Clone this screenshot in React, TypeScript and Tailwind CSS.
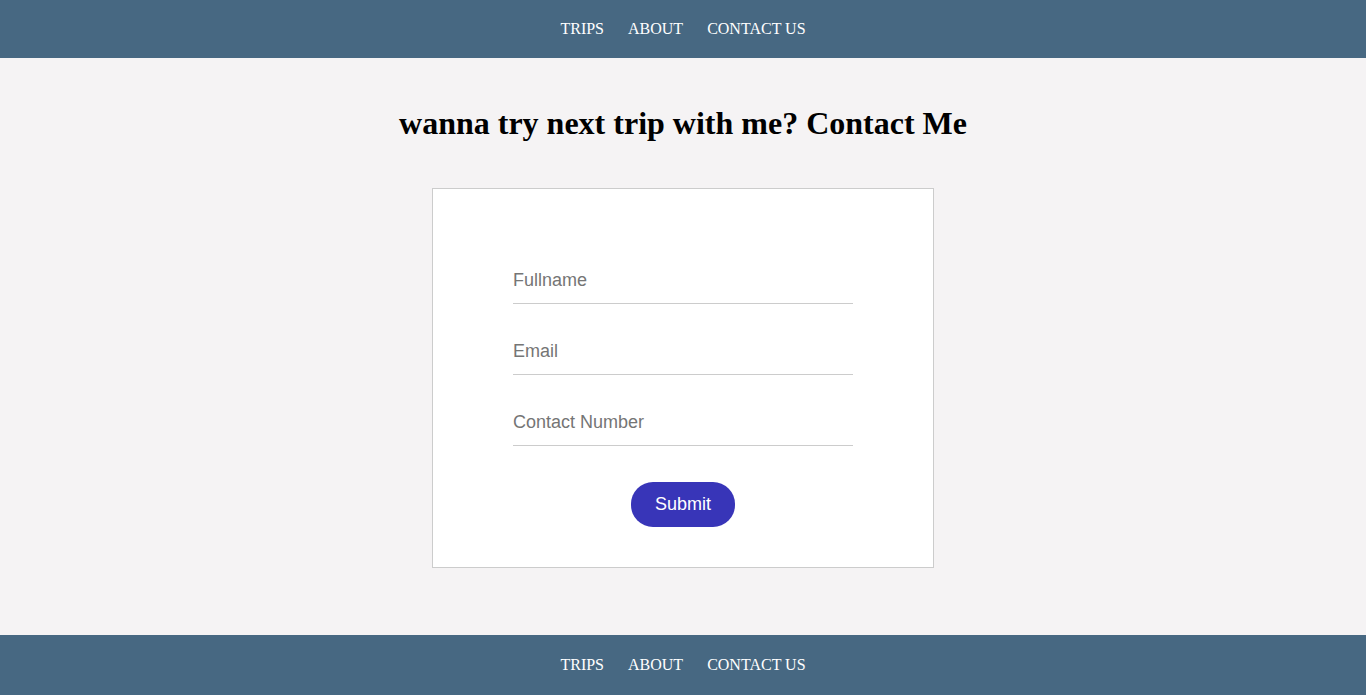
import * as React from "react"

const links = ["TRIPS", "ABOUT", "CONTACT US"]

function Nav({ className }: { className: string }) {
  return (
    <nav className={className}>
      <ul className="flex items-center justify-center gap-6">
        {links.map((l) => (
          <li key={l}>
            <a href="#" className="text-white text-[16px] leading-none">
              {l}
            </a>
          </li>
        ))}
      </ul>
    </nav>
  )
}

export default function App() {
  const fields = ["Fullname", "Email", "Contact Number"]

  return (
    <div className="min-h-screen bg-[#f5f3f4] flex flex-col font-['Liberation_Serif',serif]">
      <Nav className="h-[58px] bg-[#476882] flex items-center justify-center" />

      <main className="flex-1 flex flex-col items-center">
        <h1 className="mt-[47px] text-[32px] leading-[37px] font-bold text-black">
          wanna try next trip with me? Contact Me
        </h1>

        <form
          className="mt-[46px] w-[502px] bg-white border border-[#cccccc] pt-[69px] pb-[40px] flex flex-col items-center"
          onSubmit={(e) => e.preventDefault()}
        >
          <div className="w-[340px] flex flex-col gap-[25px]">
            {fields.map((f) => (
              <input
                key={f}
                placeholder={f}
                className="h-[46px] w-full border-b border-[#cccccc] bg-transparent outline-none text-[18px] font-['Liberation_Sans',Arial,sans-serif] placeholder:text-[#757575]"
              />
            ))}
          </div>
          <button
            type="submit"
            className="mt-[36px] w-[104px] h-[45px] rounded-[22px] bg-[#3835b8] text-white text-[18px] font-['Liberation_Sans',Arial,sans-serif]"
          >
            Submit
          </button>
        </form>
      </main>

      <Nav className="h-[60px] bg-[#476882] flex items-center justify-center" />
    </div>
  )
}
